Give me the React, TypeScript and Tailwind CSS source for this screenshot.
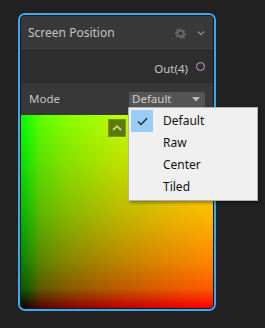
import React from "react";

const font = { fontFamily: '"Noto Sans", "Open Sans", sans-serif' };

export default function App() {
  return (
    <div className="relative w-[265px] h-[328px] bg-[#212121] pt-[13px] pl-[18px]" style={font}>
      <div className="w-[198px] h-[298px] rounded-[7px] border-2 border-[#3ba9ef]">
        <div className="h-full rounded-[5px] border border-[#181818] overflow-hidden flex flex-col bg-[#2d2d2d]">
          {/* header */}
          <div className="h-[34px] shrink-0 bg-[#393939] flex items-center pl-[7px] pr-[8px]">
            <span className="text-[12px] text-[#c4c4c4] leading-none">Screen Position</span>
            <div className="ml-auto flex items-center gap-[11px]">
              <svg width="11" height="11" viewBox="0 0 24 24" fill="#666666">
                <path d="M10 1h4l.6 3.2 2 .9 2.7-1.9 2.8 2.8-1.9 2.7.9 2 3.2.6v4l-3.2.6-.9 2 1.9 2.7-2.8 2.8-2.7-1.9-2 .9L14 23h-4l-.6-3.2-2-.9-2.7 1.9-2.8-2.8 1.9-2.7-.9-2L0 14v-4l3.2-.6.9-2L2.2 4.7 5 1.9l2.7 1.9 2-.9z M12 7.5a4.5 4.5 0 1 0 0 9 4.5 4.5 0 0 0 0-9z" fillRule="evenodd" />
              </svg>
              <svg width="8" height="6" viewBox="0 0 8 6" fill="none" stroke="#8c8c8c" strokeWidth="1.3">
                <path d="M1 1.5 L4 4.5 L7 1.5" />
              </svg>
            </div>
          </div>
          {/* out row */}
          <div className="h-[33px] shrink-0 bg-[#2e2e2e] border-t border-[#262626] flex items-center justify-end pr-[8px]">
            <span className="text-[11.5px] text-[#c4c4c4] leading-none mt-[3px]">Out(4)</span>
            <div className="ml-[8px] mb-[2px] w-[9px] h-[9px] rounded-full border-[1.5px] border-[#d89ee0]" />
          </div>
          {/* mode row */}
          <div className="h-[32px] shrink-0 bg-[#383838] flex items-center pl-[8px] pr-[8px]">
            <span className="text-[11.5px] text-[#c4c4c4] leading-none">Mode</span>
            <div className="ml-auto w-[76px] h-[15px] rounded-[2px] bg-[#555555] flex items-center pl-[3px] pr-[5px]">
              <span className="text-[11.5px] text-[#cdcdcd] leading-none">Default</span>
              <svg className="ml-auto" width="8" height="5" viewBox="0 0 8 5">
                <path d="M0 0 H8 L4 4.5 Z" fill="#bdbdbd" />
              </svg>
            </div>
          </div>
          {/* preview */}
          <div className="relative flex-1 bg-[linear-gradient(to_bottom,#00ff00_0%,#00e000_25%,#00ba00_50%,#008800_75%,#005a00_90%,#000000_100%),linear-gradient(to_right,#000000_0%,#5a0000_10%,#880000_25%,#ba0000_50%,#e00000_75%,#ff0000_100%)] bg-blend-screen">
            <div className="absolute left-[87px] top-[4px] w-[18px] h-[18px] bg-[#00000080] border border-[#7d8d35] flex items-center justify-center">
              <svg width="10" height="6" viewBox="0 0 10 6" fill="none" stroke="#c8d0a8" strokeWidth="1.8">
                <path d="M1 5 L5 1.2 L9 5" />
              </svg>
            </div>
          </div>
        </div>
      </div>
      {/* dropdown menu */}
      <div className="absolute left-[128px] top-[107px] w-[130px] h-[94px] bg-[#f0f0f0] border border-[#b0b0b0] shadow-[2px_2px_3px_rgba(0,0,0,0.35)] p-[2px] flex flex-col">
        {["Default", "Raw", "Center", "Tiled"].map((t, i) => (
          <div key={t} className="h-[22px] flex items-center">
            <div className={i === 0 ? "w-[22px] h-[22px] bg-[#99cdf6] flex items-center justify-center" : "w-[22px] h-[22px]"}>
              {i === 0 && (
                <svg width="11" height="9" viewBox="0 0 11 9" fill="none" stroke="#2b2b2b" strokeWidth="1.5">
                  <path d="M1 4.5 L4 7.5 L10 1.2" />
                </svg>
              )}
            </div>
            <span className="ml-[10px] text-[12px] text-[#111111] leading-none">{t}</span>
          </div>
        ))}
      </div>
    </div>
  );
}
